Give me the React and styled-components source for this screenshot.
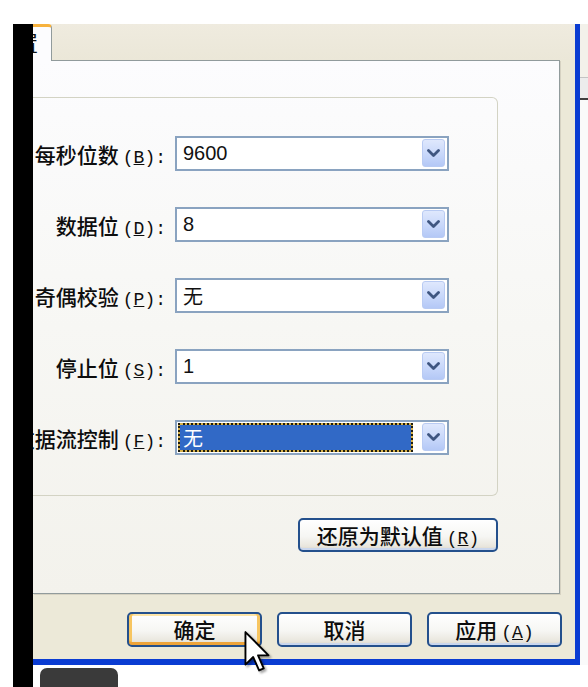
import React from 'react';
import styled, { createGlobalStyle } from 'styled-components';

const GlobalStyle = createGlobalStyle`
    html, body {
        margin: 0;
        padding: 0;
        background: #ffffff;
    }
    body {
        overflow: hidden;
        font-family: "Noto Sans CJK SC", "Liberation Sans", sans-serif;
    }
`;

const Page = styled.div`
    position: relative;
    width: 588px;
    height: 687px;
    overflow: hidden;
    background: #ffffff;
    display: flex;
    flex-direction: column;
`;
const TopBand = styled.div`
    height: 24px;
    flex: none;
`;
const Main = styled.div`
    flex: 1;
    display: flex;
    min-height: 0;
`;
const Gutter = styled.div`
    width: 13px;
    flex: none;
`;
const BlackBar = styled.div`
    width: 20px;
    flex: none;
    background: #000000;
`;
const Stage = styled.div`
    flex: 1;
    min-width: 0;
    display: flex;
    flex-direction: column;
`;
const WindowRow = styled.div`
    height: 641px;
    flex: none;
    display: flex;
`;
const Dialog = styled.div`
    width: 547px;
    flex: none;
    box-sizing: border-box;
    background: #ece9d8;
    border-right: 5px solid #0a3cd2;
    border-bottom: 6px solid #0a3cd2;
    display: flex;
    flex-direction: column;
`;
const TabStrip = styled.div`
    height: 36px;
    flex: none;
    display: flex;
    background: linear-gradient(180deg, #efebdf 0%, #ebe7d8 100%);
`;
const Tab = styled.div`
    position: relative;
    z-index: 1;
    width: 19px;
    margin-bottom: -1px;
    box-sizing: border-box;
    background: #fcfcfe;
    border-top: 3px solid #f7b23d;
    border-right: 1px solid #919b9c;
    border-top-right-radius: 4px;
    overflow: hidden;
    display: flex;
    justify-content: flex-end;
    padding: 2px 13px 0 0;
    font-size: 21px;
    line-height: 26px;
    white-space: nowrap;
    color: #111;
`;
const TabPage = styled.div`
    height: 534px;
    flex: none;
    margin-right: 15px;
    box-sizing: border-box;
    border-top: 1px solid #919b9c;
    border-right: 1px solid #919b9c;
    border-bottom: 1px solid #919b9c;
    box-shadow: 1px 1px 0 #d6d2c2;
    background: linear-gradient(180deg, #fcfcfe 0%, #f7f7f4 50%, #f3f2ec 100%);
    padding: 36px 61px 0 0;
    display: flex;
    flex-direction: column;
`;
const GroupBox = styled.div`
    height: 399px;
    box-sizing: border-box;
    border: 1px solid #d3d3c4;
    border-left: none;
    border-radius: 0 6px 6px 0;
    padding-top: 38px;
    display: flex;
    flex-direction: column;
    gap: 36px;
`;
const Row = styled.div`
    height: 35px;
    display: flex;
    align-items: center;
`;
const Label = styled.div`
    width: 133px;
    flex: none;
    margin-right: 9px;
    overflow: hidden;
    white-space: nowrap;
    display: flex;
    justify-content: flex-end;
    align-items: baseline;
    font-size: 21px;
    font-weight: 500;
    color: #0d0d0d;
`;
const Key = styled.span`
    font-family: "Liberation Mono", monospace;
    font-size: 18px;
    font-weight: 400;
    margin-left: 4px;
    span {
        text-decoration: underline;
    }
`;
const Select = styled.div`
    width: 274px;
    height: 35px;
    box-sizing: border-box;
    border: 2px solid #8aa3c0;
    background: #ffffff;
    display: flex;
    align-items: center;
    padding: 0 2px 1px 1px;
`;
const Value = styled.div`
    flex: 1;
    height: 29px;
    margin-right: 9px;
    box-sizing: border-box;
    display: flex;
    align-items: center;
    padding-left: 5px;
    font-family: "Liberation Sans", "Noto Sans CJK SC", sans-serif;
    font-size: 20px;
    color: ${props => (props.$selected ? '#ffffff' : '#111111')};
    background: ${props => (props.$selected ? '#3169c6' : 'transparent')};
    outline: ${props => (props.$selected ? '2px dotted #1c1c10' : 'none')};
    outline-offset: -2px;
    box-shadow: ${props => (props.$selected ? 'inset 0 0 0 2px #d8b24a' : 'none')};
`;
const ArrowButton = styled.div`
    width: 23px;
    height: 28px;
    box-sizing: border-box;
    border: 1px solid #b9cbf3;
    border-radius: 3px;
    background: linear-gradient(180deg, #dfe8fd 0%, #c6d6fa 60%, #b4c8f6 100%);
    display: flex;
    align-items: center;
    justify-content: center;
`;
const RestoreRow = styled.div`
    margin-top: 22px;
    display: flex;
    justify-content: flex-end;
`;
const ButtonBar = styled.div`
    flex: 1;
    display: flex;
    justify-content: flex-end;
    gap: 15px;
    padding: 18px 13px 0 0;
`;
const XPButton = styled.button`
    width: ${props => props.$w}px;
    height: ${props => props.$h}px;
    box-sizing: border-box;
    padding: 0;
    border: 2px solid #24508c;
    border-radius: 5px;
    background: linear-gradient(180deg, #ffffff 0%, #f6f6f3 55%, #e9e6dd 88%, #d9d4c8 100%);
    box-shadow: ${props => (props.$default
        ? 'inset 0 -3px 0 #eea43a, inset 3px 0 0 #f7c560, inset -3px 0 0 #f7c560, inset 0 2px 0 #ffe6a8'
        : 'inset 0 -2px 0 #cad7ee, inset 0 1px 0 #ffffff')};
    display: flex;
    align-items: baseline;
    justify-content: center;
    line-height: 30px;
    font-family: "Noto Sans CJK SC", sans-serif;
    font-size: 21px;
    font-weight: 500;
    color: #0d0d0d;
    white-space: nowrap;
`;
const Behind = styled.div`
    flex: 1;
    display: flex;
    flex-direction: column;
    background: #fafafa;
`;
const BehindTop = styled.div`
    height: 53px;
    background: #f3f1ea;
    border-bottom: 1px solid #c4c4c4;
`;
const BehindBand = styled.div`
    height: 20px;
    background: #ececec;
    border-bottom: 2px solid #3e3e3e;
`;
const BelowRow = styled.div`
    flex: 1;
    display: flex;
    align-items: flex-end;
    padding-left: 7px;
`;
const TaskChip = styled.div`
    width: 78px;
    height: 19px;
    background: #3a3a3a;
    border-radius: 7px 7px 0 0;
`;
const Cursor = styled.svg`
    position: absolute;
    left: 244px;
    top: 631px;
    filter: drop-shadow(2px 2px 1px rgba(0, 0, 0, 0.35));
`;

const rows = [
    { label: '每秒位数', key: 'B', value: '9600' },
    { label: '数据位', key: 'D', value: '8' },
    { label: '奇偶校验', key: 'P', value: '无' },
    { label: '停止位', key: 'S', value: '1' },
    { label: '数据流控制', key: 'F', value: '无', selected: true },
];

const Chevron = () => (
    <svg width="13" height="9" viewBox="0 0 13 9">
        <path d="M1.5 1.5 L6.5 6.5 L11.5 1.5" stroke="#3f5681" strokeWidth="2.8" fill="none" strokeLinecap="round" strokeLinejoin="round" />
    </svg>
);

export default () => {
    return (
        <Page>
            <GlobalStyle />
            <TopBand />
            <Main>
                <Gutter />
                <BlackBar />
                <Stage>
                    <WindowRow>
                        <Dialog>
                            <TabStrip>
                                <Tab>端口设置</Tab>
                            </TabStrip>
                            <TabPage>
                                <GroupBox>
                                    {rows.map(r => (
                                        <Row key={r.key}>
                                            <Label>
                                                {r.label}
                                                <Key>(<span>{r.key}</span>):</Key>
                                            </Label>
                                            <Select>
                                                <Value $selected={r.selected}>{r.value}</Value>
                                                <ArrowButton><Chevron /></ArrowButton>
                                            </Select>
                                        </Row>
                                    ))}
                                </GroupBox>
                                <RestoreRow>
                                    <XPButton $w={200} $h={34}>
                                        还原为默认值<Key>(<span>R</span>)</Key>
                                    </XPButton>
                                </RestoreRow>
                            </TabPage>
                            <ButtonBar>
                                <XPButton $w={135} $h={35} $default>确定</XPButton>
                                <XPButton $w={135} $h={35}>取消</XPButton>
                                <XPButton $w={135} $h={35}>
                                    应用<Key>(<span>A</span>)</Key>
                                </XPButton>
                            </ButtonBar>
                        </Dialog>
                        <Behind>
                            <BehindTop />
                            <BehindBand />
                        </Behind>
                    </WindowRow>
                    <BelowRow>
                        <TaskChip />
                    </BelowRow>
                </Stage>
            </Main>
            <Cursor width="26" height="42" viewBox="0 0 12 20">
                <path d="M0.5 0.5 L0.5 16 L4.2 12.4 L7 18.8 L9.2 17.8 L6.5 11.6 L11.5 11.6 Z" fill="#ffffff" stroke="#000000" strokeWidth="0.9" strokeLinejoin="round" />
            </Cursor>
        </Page>
    );
};
